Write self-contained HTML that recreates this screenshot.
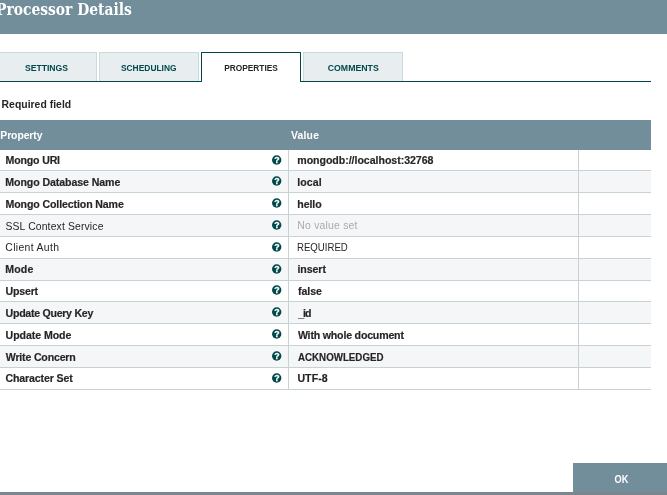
<!DOCTYPE html>
<html><head><meta charset="utf-8"><title>Processor Details</title>
<style>
html,body{margin:0;padding:0;}
body{width:667px;height:495px;position:relative;overflow:hidden;background:#fff;font-family:"Liberation Sans",sans-serif;color:#262626;}
.abs{position:absolute;}
#wrap{position:absolute;left:0;top:0;width:667px;height:495px;will-change:transform;}
#hdr{left:0;top:0;width:667px;height:34px;background:#728e9b;}
#title{left:-4px;top:-2.1px;font-family:"DejaVu Serif Condensed","DejaVu Serif","Liberation Serif",serif;font-stretch:condensed;font-weight:bold;font-size:16px;color:#fff;white-space:nowrap;line-height:24px;transform-origin:0 0;transform:scaleX(0.963);}
.tab{top:52px;height:29px;width:100px;box-sizing:border-box;background:#e8eef0;border:1px solid #ccdadb;border-bottom:none;color:#004849;font-size:9px;font-weight:bold;text-align:center;line-height:31px;white-space:nowrap;}
.tab span{display:inline-block;}
.tab.sel{background:#fff;border:1px solid #004849;border-bottom:none;height:30px;color:#262626;z-index:2;}
#tabline{left:0;top:81px;width:651px;height:1px;background:#004849;}
#req{left:1.6px;top:98px;letter-spacing:0.02px;font-size:10.4px;font-weight:bold;line-height:14px;white-space:nowrap;}
#thead{left:0;top:120px;width:651px;height:30px;background:#728e9b;}
.th{top:121px;height:30px;line-height:30px;color:#fff;font-weight:bold;font-size:10.4px;white-space:nowrap;}
.row{left:0;width:651px;height:21px;border-bottom:1px solid #c7d2d7;}
.row.odd{background:#f4f6f7;}
.row div{position:absolute;top:0;height:21px;line-height:21px;font-size:10.6px;font-weight:bold;-webkit-text-stroke:0.18px #262626;white-space:nowrap;}
.row .p{left:6px;}
.row .v{left:298px;}
.row.opt div{font-weight:normal;-webkit-text-stroke:0;font-size:10.4px;}
.row .unset{color:#aaa;}
.vl{top:150px;width:1px;height:240px;background:#c7d2d7;}
.q{left:270px;top:4px;width:12px;height:12px;}
#ok{left:573px;top:463px;width:94px;height:29px;box-sizing:border-box;padding-left:3px;background:#728e9b;color:#fff;font-size:10px;font-weight:bold;text-align:center;line-height:32px;}
#ok span{display:inline-block;transform:translateY(0.6px) scaleX(0.92);}
#bot{left:0;top:492px;width:667px;height:3px;background:#7a878e;}
</style></head><body><div id="wrap">
<div id="hdr" class="abs"></div>
<div id="title" class="abs">Processor Details</div>
<div class="abs tab" style="left:-3px"><span style="transform:scaleX(0.957)">SETTINGS</span></div>
<div class="abs tab" style="left:99px"><span style="transform:scaleX(0.935)">SCHEDULING</span></div>
<div class="abs tab sel" style="left:201px"><span style="transform:scaleX(0.926)">PROPERTIES</span></div>
<div class="abs tab" style="left:303px"><span style="transform:scaleX(0.973)">COMMENTS</span></div>
<div id="tabline" class="abs"></div>
<div id="req" class="abs">Required field</div>
<div id="thead" class="abs"></div>
<div class="abs th" style="left:0.3px;letter-spacing:-0.08px">Property</div>
<div class="abs th" style="left:291px;letter-spacing:0.2px">Value</div>
<div id="rows">
<div class="abs row" style="top:150px;height:20px"><div class="p" style="left:5.56px;top:0px;letter-spacing:-0.173px">Mongo URI</div><svg class="abs q" viewBox="0 0 12 12"><circle cx="6.7" cy="6" r="4.7" fill="#004849"/><text x="6.95" y="9.15" font-size="8.8" font-weight="bold" fill="#fff" stroke="#fff" stroke-width="0.3" text-anchor="middle" font-family="Liberation Sans, sans-serif">?</text></svg><div class="v" style="left:297.28px;top:0px;letter-spacing:-0.041px">mongodb://localhost:32768</div></div>
<div class="abs row odd" style="top:171px;height:21px"><div class="p" style="left:5.29px;top:1px;letter-spacing:-0.086px">Mongo Database Name</div><svg class="abs q" viewBox="0 0 12 12"><circle cx="6.7" cy="6" r="4.7" fill="#004849"/><text x="6.95" y="9.15" font-size="8.8" font-weight="bold" fill="#fff" stroke="#fff" stroke-width="0.3" text-anchor="middle" font-family="Liberation Sans, sans-serif">?</text></svg><div class="v" style="left:297.30px;top:1px;letter-spacing:0.043px">local</div></div>
<div class="abs row" style="top:193px;height:21px"><div class="p" style="left:5.56px;top:1px;letter-spacing:-0.120px">Mongo Collection Name</div><svg class="abs q" viewBox="0 0 12 12"><circle cx="6.7" cy="6" r="4.7" fill="#004849"/><text x="6.95" y="9.15" font-size="8.8" font-weight="bold" fill="#fff" stroke="#fff" stroke-width="0.3" text-anchor="middle" font-family="Liberation Sans, sans-serif">?</text></svg><div class="v" style="left:297.30px;top:1px;letter-spacing:-0.098px">hello</div></div>
<div class="abs row odd opt" style="top:215px;height:21px"><div class="p" style="left:5.44px;top:1px;letter-spacing:0.139px">SSL Context Service</div><svg class="abs q" viewBox="0 0 12 12"><circle cx="6.7" cy="6" r="4.7" fill="#004849"/><text x="6.95" y="9.15" font-size="8.8" font-weight="bold" fill="#fff" stroke="#fff" stroke-width="0.3" text-anchor="middle" font-family="Liberation Sans, sans-serif">?</text></svg><div class="v unset" style="left:297.36px;top:0px;letter-spacing:0.211px">No value set</div></div>
<div class="abs row opt" style="top:237px;height:21px"><div class="p" style="left:5.37px;top:0px;letter-spacing:0.335px">Client Auth</div><svg class="abs q" viewBox="0 0 12 12"><circle cx="6.7" cy="6" r="4.7" fill="#004849"/><text x="6.95" y="9.15" font-size="8.8" font-weight="bold" fill="#fff" stroke="#fff" stroke-width="0.3" text-anchor="middle" font-family="Liberation Sans, sans-serif">?</text></svg><div class="v" style="left:297.04px;top:0px;letter-spacing:0.000px;transform-origin:0 50%;transform:scaleX(0.9263)">REQUIRED</div></div>
<div class="abs row odd" style="top:259px;height:21px"><div class="p" style="left:5.36px;top:0px;letter-spacing:0.105px">Mode</div><svg class="abs q" viewBox="0 0 12 12"><circle cx="6.7" cy="6" r="4.7" fill="#004849"/><text x="6.95" y="9.15" font-size="8.8" font-weight="bold" fill="#fff" stroke="#fff" stroke-width="0.3" text-anchor="middle" font-family="Liberation Sans, sans-serif">?</text></svg><div class="v" style="left:297.40px;top:0px;letter-spacing:-0.064px">insert</div></div>
<div class="abs row" style="top:281px;height:20px"><div class="p" style="left:5.56px;top:0px;letter-spacing:-0.194px">Upsert</div><svg class="abs q" viewBox="0 0 12 12"><circle cx="6.7" cy="5" r="4.7" fill="#004849"/><text x="6.95" y="8.15" font-size="8.8" font-weight="bold" fill="#fff" stroke="#fff" stroke-width="0.3" text-anchor="middle" font-family="Liberation Sans, sans-serif">?</text></svg><div class="v" style="left:297.97px;top:0px;letter-spacing:-0.026px">false</div></div>
<div class="abs row odd" style="top:302px;height:21px"><div class="p" style="left:5.58px;top:1px;letter-spacing:-0.276px">Update Query Key</div><svg class="abs q" viewBox="0 0 12 12"><circle cx="6.7" cy="6" r="4.7" fill="#004849"/><text x="6.95" y="9.15" font-size="8.8" font-weight="bold" fill="#fff" stroke="#fff" stroke-width="0.3" text-anchor="middle" font-family="Liberation Sans, sans-serif">?</text></svg><div class="v" style="left:298.18px;top:1px;letter-spacing:-0.960px">_id</div></div>
<div class="abs row" style="top:324px;height:21px"><div class="p" style="left:5.56px;top:1px;letter-spacing:-0.069px">Update Mode</div><svg class="abs q" viewBox="0 0 12 12"><circle cx="6.7" cy="6" r="4.7" fill="#004849"/><text x="6.95" y="9.15" font-size="8.8" font-weight="bold" fill="#fff" stroke="#fff" stroke-width="0.3" text-anchor="middle" font-family="Liberation Sans, sans-serif">?</text></svg><div class="v" style="left:297.92px;top:1px;letter-spacing:-0.187px">With whole document</div></div>
<div class="abs row odd" style="top:346px;height:21px"><div class="p" style="left:5.80px;top:1px;letter-spacing:-0.187px">Write Concern</div><svg class="abs q" viewBox="0 0 12 12"><circle cx="6.7" cy="6" r="4.7" fill="#004849"/><text x="6.95" y="9.15" font-size="8.8" font-weight="bold" fill="#fff" stroke="#fff" stroke-width="0.3" text-anchor="middle" font-family="Liberation Sans, sans-serif">?</text></svg><div class="v" style="left:297.69px;top:1px;letter-spacing:0.000px;transform-origin:0 50%;transform:scaleX(0.9195)">ACKNOWLEDGED</div></div>
<div class="abs row" style="top:368px;height:21px"><div class="p" style="left:5.46px;top:0px;letter-spacing:-0.140px">Character Set</div><svg class="abs q" viewBox="0 0 12 12"><circle cx="6.7" cy="6" r="4.7" fill="#004849"/><text x="6.95" y="9.15" font-size="8.8" font-weight="bold" fill="#fff" stroke="#fff" stroke-width="0.3" text-anchor="middle" font-family="Liberation Sans, sans-serif">?</text></svg><div class="v" style="left:297.38px;top:0px;letter-spacing:0.068px">UTF-8</div></div>
<div class="abs vl" style="left:288px"></div><div class="abs vl" style="left:578px"></div>
</div>
<div id="ok" class="abs"><span>OK</span></div>
<div id="bot" class="abs"></div>
</div></body></html>
